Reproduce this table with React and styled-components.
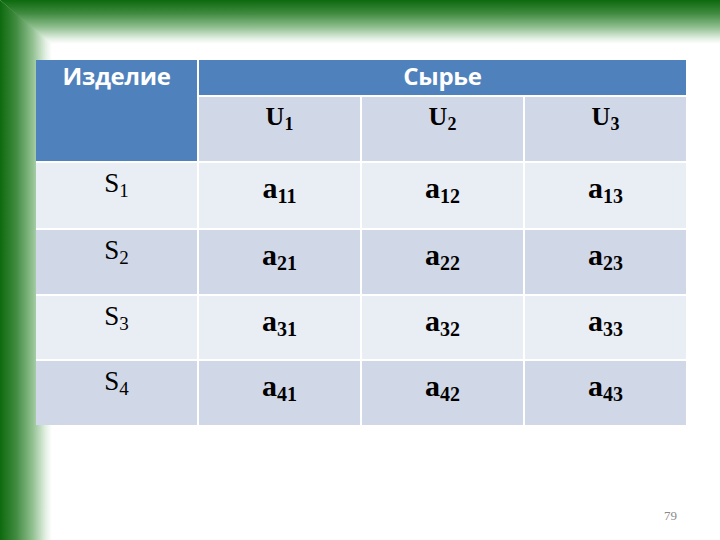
import React from 'react';
import styled, { createGlobalStyle } from 'styled-components';

const GlobalStyle = createGlobalStyle`
  html, body {
    margin: 0;
    padding: 0;
    background: #fff;
  }
`;

const green = '#0d6a0d, #3f8a3f 30%, #8fbf8f 62%, #e4f0e4 88%, #ffffff';

const Slide = styled.div`
  position: relative;
  width: 720px;
  height: 540px;
  overflow: hidden;
  background: #fff;
  display: flex;
  flex-direction: column;
  padding: 60px 35px 16px 36px;
  box-sizing: border-box;
  font-family: 'Liberation Serif', serif;

  &::before {
    content: '';
    position: absolute;
    left: 0;
    top: 0;
    right: 0;
    height: 44px;
    background: linear-gradient(to bottom, ${green});
    clip-path: polygon(0 0, 100% 0, 100% 100%, 50px 100%);
  }

  &::after {
    content: '';
    position: absolute;
    left: 0;
    top: 0;
    bottom: 0;
    width: 52px;
    background: linear-gradient(to right, ${green});
    clip-path: polygon(0 0, 100% 44px, 100% 100%, 0 100%);
  }
`;

const Grid = styled.div`
  position: relative;
  z-index: 1;
  display: grid;
  grid-template-columns: 161px 161px 161px 161px;
  grid-template-rows: 35px 64px 65px 64px 63px 64px;
  gap: 2px;
  width: 650px;
  background: #fff;
`;

const HeadCell = styled.div`
  grid-row: ${p => p.$row || 'auto'};
  grid-column: ${p => p.$col || 'auto'};
  background: #4f81bd;
  color: #fff;
  font-family: 'Open Sans', 'DejaVu Sans', sans-serif;
  font-weight: 700;
  font-size: 24px;
  line-height: 28px;
  letter-spacing: -0.3px;
  text-align: center;
  padding-top: 2px;
`;

const Cell = styled.div`
  background: ${p => (p.$shade ? '#d0d8e8' : '#e9edf4')};
  color: #000;
  font-family: 'Liberation Serif', serif;
  text-align: center;
  padding-top: ${p => p.$pad || 8}px;
`;

const Sym = styled.span`
  font-family: 'Liberation Serif', serif;
  font-size: ${p => p.$size}px;
  font-weight: ${p => (p.$bold ? 700 : 400)};
  line-height: 1.1;

  & sub {
    font-family: 'Liberation Serif', serif;
    font-size: ${p => p.$sub}px;
    vertical-align: -5px;
    line-height: 0;
  }
`;

const Footer = styled.div`
  margin-top: auto;
  display: flex;
  justify-content: flex-end;
  padding-right: 8px;
`;

const PageNum = styled.span`
  position: relative;
  z-index: 1;
  font-family: 'Liberation Serif', serif;
  font-size: 13px;
  color: #8a8a8a;
`;

const rows = [1, 2, 3, 4];

export default function App () {
  return (
    <>
      <GlobalStyle />
      <Slide>
        <Grid>
          <HeadCell $row='1 / 3' $col='1'>Изделие</HeadCell>
          <HeadCell $row='1' $col='2 / 5'>Сырье</HeadCell>
          {[1, 2, 3].map(j => (
            <Cell key={`u${j}`} $shade $pad={6}>
              <Sym $size={26} $sub={18} $bold>U<sub>{j}</sub></Sym>
            </Cell>
          ))}
          {rows.map((s, i) => (
            <React.Fragment key={s}>
              <Cell $shade={i % 2 === 1} $pad={6}>
                <Sym $size={27} $sub={19}>S<sub>{s}</sub></Sym>
              </Cell>
              {[1, 2, 3].map(j => (
                <Cell key={j} $shade={i % 2 === 1} $pad={8}>
                  <Sym $size={30} $sub={20} $bold>a<sub>{s}{j}</sub></Sym>
                </Cell>
              ))}
            </React.Fragment>
          ))}
        </Grid>
        <Footer>
          <PageNum>79</PageNum>
        </Footer>
      </Slide>
    </>
  );
}
